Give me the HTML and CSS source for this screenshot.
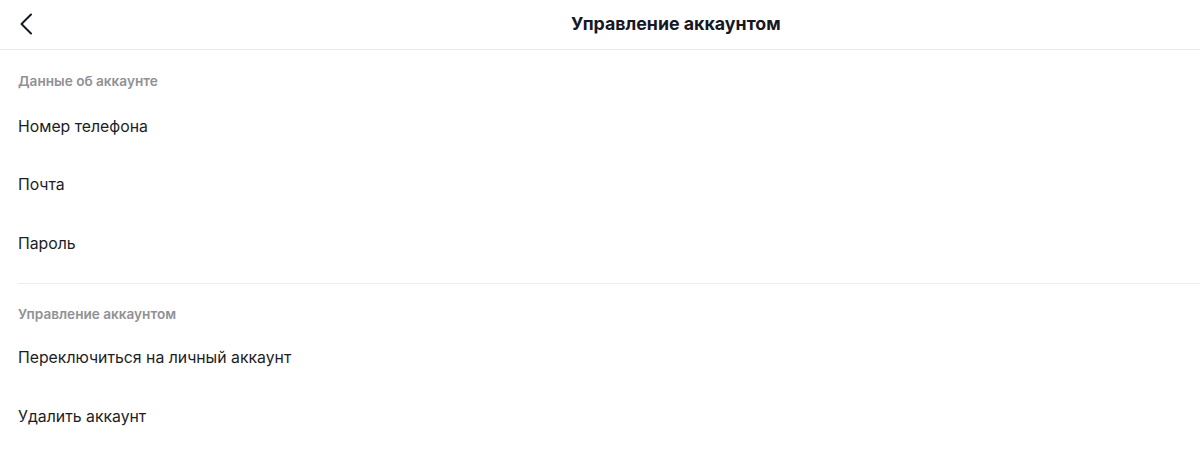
FILE: index.html
```html
<!DOCTYPE html>
<html lang="ru">
<head>
<meta charset="utf-8">
<title>Управление аккаунтом</title>
<link rel="stylesheet" href="styles.css">
</head>
<body>
<header class="header">
  <button class="back" aria-label="Назад">
    <svg width="14" height="22" viewBox="0 0 14 22"><path d="M12 1.5 L2.5 11 L12 20.5" fill="none" stroke="#161823" stroke-width="2" stroke-linecap="round" stroke-linejoin="round"/></svg>
  </button>
  <h1 class="title">Управление аккаунтом</h1>
</header>
<main>
  <section class="section section-first">
    <div class="label">Данные об аккаунте</div>
    <div class="item">Номер телефона</div>
    <div class="item">Почта</div>
    <div class="item">Пароль</div>
  </section>
  <section class="section section-second">
    <div class="label">Управление аккаунтом</div>
    <div class="item">Переключиться на личный аккаунт</div>
    <div class="item">Удалить аккаунт</div>
  </section>
</main>
</body>
</html>
```
FILE: styles.css
```css
* { box-sizing: border-box; }
html, body { margin: 0; padding: 0; background: #fff; }
body {
  font-family: Inter, "Noto Sans", sans-serif;
  color: #161823;
  width: 1200px;
  height: 472px;
  overflow: hidden;
}
.header {
  height: 50px;
  border-bottom: 1px solid #e8e8e9;
  display: flex;
  align-items: center;
  padding-left: 19px;
}
.back {
  border: 0;
  background: none;
  padding: 0;
  width: 14px;
  height: 22px;
  display: flex;
  margin-top: -1px;
}
.title {
  margin: -2px 0 0 538px;
  font-size: 17.8px;
  font-weight: 700;
  line-height: 20px;
}
.section {
  margin-left: 18px;
  padding-bottom: 10px;
}
.section-first { border-bottom: 1px solid #ececed; }
.label {
  font-size: 13.6px;
  font-weight: 600;
  color: #909196;
  line-height: 18px;
  padding-top: 22px;
  padding-bottom: 7px;
}
.section-second .label { padding-top: 21px; padding-bottom: 6px; }
.item {
  height: 58.5px;
  display: flex;
  align-items: center;
  font-size: 15.8px;
  color: #1c1d26;
}
```
